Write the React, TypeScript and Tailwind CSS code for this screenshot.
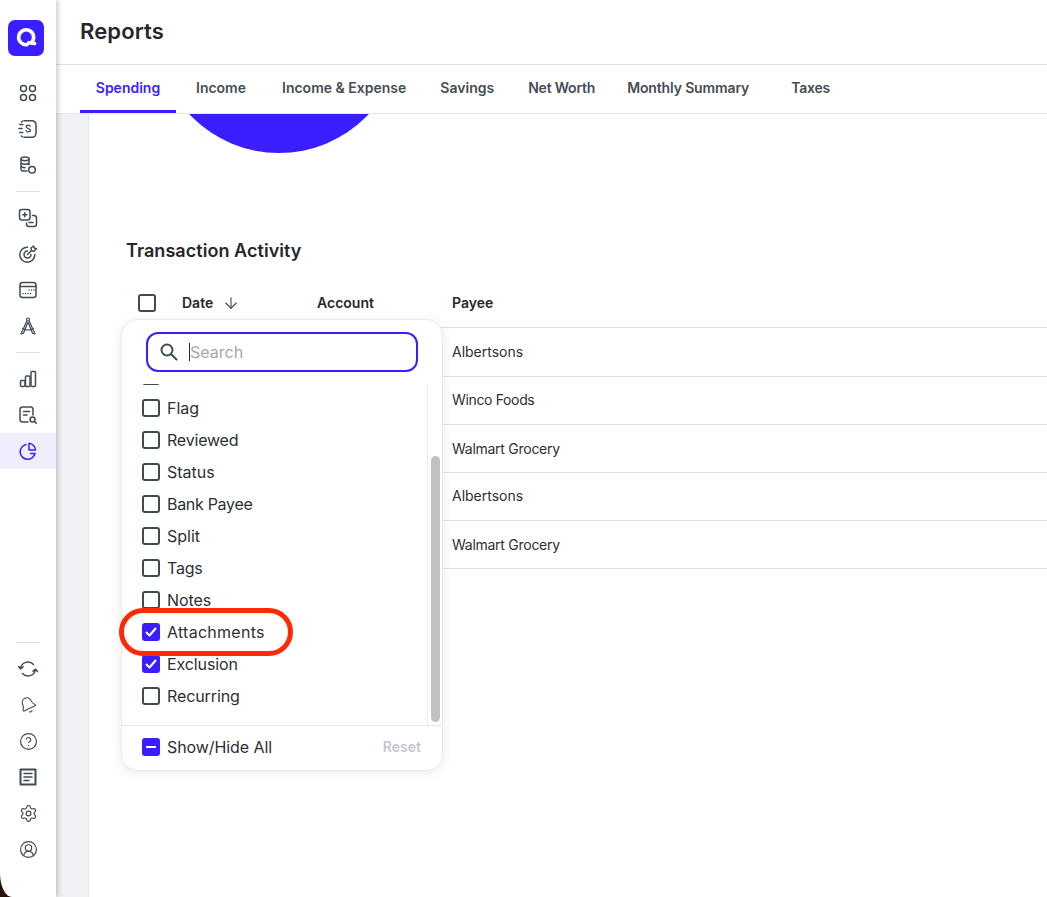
import React from "react";
import { Bell, CircleHelp, Settings, CircleUserRound, ArrowDown } from "lucide-react";

const stroke = { fill: "none", stroke: "currentColor", strokeWidth: 1.5, strokeLinecap: "round" as const, strokeLinejoin: "round" as const };

function Svg({ children }: { children: React.ReactNode }) {
  return <svg width="20" height="20" viewBox="0 0 20 20" {...stroke}>{children}</svg>;
}

const Grid = () => <Svg><circle cx="5.500" cy="5.500" r="3" /><circle cx="14.500" cy="5.500" r="3" /><circle cx="5.500" cy="14.500" r="3" /><circle cx="14.500" cy="14.500" r="3" /></Svg>;
const Receipt = () => <Svg><path d="M6 1.700h8a4 4 0 0 1 4 4v8.600a4 4 0 0 1-4 4H6" /><path d="M4.500 2.200l-1 .8M1.800 5.500h3M1 9.500h3M1.800 13.500h3M3.500 17l1 .8" /><path d="M12.200 7.200c-.4-.7-1.100-1-2-1-1.200 0-2 .6-2 1.600 0 2.200 4.200 1.200 4.200 3.500 0 1-.9 1.600-2.100 1.600-1 0-1.800-.4-2.200-1.200" strokeWidth="1.300" /></Svg>;
const Coins = () => <Svg><ellipse cx="7" cy="3.800" rx="4" ry="1.900" /><path d="M3 3.800v10.400c0 1 1.800 1.900 4 1.900h2M11 3.800v6M3 7.300c0 1 1.800 1.900 4 1.900s4-.9 4-1.900M3 10.800c0 1 1.800 1.900 4 1.900" /><circle cx="14" cy="14.800" r="3.300" /></Svg>;
const PlusMinus = () => <Svg><rect x="1.500" y="1.500" width="10.500" height="10.500" rx="2.500" /><path d="M6.800 4.800v4M4.800 6.800h4" /><path d="M14.500 7.500h1.500a2.500 2.500 0 0 1 2.500 2.500v6a2.500 2.500 0 0 1-2.500 2.500h-5a2.500 2.500 0 0 1-2.500-2.500V15" /><path d="M11 14.500h4" /></Svg>;
const Target = () => <Svg><path d="M9.500 3.200a7.500 7.500 0 1 0 7.300 7.300" /><path d="M9.500 7a3.500 3.500 0 1 0 3.500 3.500" /><path d="M9.500 10.500l4-4M13 4l2.500-2 .8 2 2 .8-2.300 2.400-2.500-.4z" /></Svg>;
const Calendar = () => <Svg><rect x="2" y="2.500" width="16" height="15" rx="2.500" /><path d="M2 6.500h16" /><path d="M11 10h.01M13.500 10h.01M16 10h.01M5 13.500h.01M7.500 13.500h.01M10 13.500h.01M12.500 13.500h.01" /></Svg>;
const Bars = () => <Svg><rect x="2.500" y="11.500" width="4.500" height="6" rx="1" /><rect x="7.500" y="7" width="4.500" height="10.500" rx="1" /><rect x="13" y="2.500" width="4.500" height="15" rx="1" /></Svg>;
const ReportSearch = () => <Svg><path d="M10 17H4.500A2.500 2.500 0 0 1 2 14.500v-10A2.500 2.500 0 0 1 4.500 2h8A2.500 2.500 0 0 1 15 4.500V10" /><path d="M5.500 6.500h6M5.500 10h3.500" /><circle cx="14.500" cy="14.500" r="2.500" /><path d="M16.500 16.500l1.800 1.800" /></Svg>;
const Pie = () => <Svg><path d="M8 3.500a7.500 7.500 0 1 0 9 9h-4.500" /><path d="M11 2.300a7 7 0 0 1 6.500 6.700H11z" /></Svg>;
const Paper = () => <Svg><rect x="2.500" y="2.500" width="15" height="15" strokeWidth="2" /><path d="M6 6.500h8M6 10h8M6 13.500h5" /></Svg>;
const CompassIcon = () => <Svg><circle cx="10" cy="3.500" r="1.500" strokeWidth="1.200" /><path d="M8.800 5L3 18l2.500-.8L9.800 6.500M11.200 5L17 18l-2.500-.8L10.200 6.500" strokeWidth="1.200" /><path d="M4.800 12.500q5.200 3 10.400 0" strokeWidth="1.200" /></Svg>;
const Sync = () => <Svg><path d="M2.500 9.500A7.500 7.500 0 0 1 15.500 5.500" /><path d="M.6 7.500l1.900 2.300 2.500-2" /><path d="M17.500 10.500A7.500 7.500 0 0 1 4.500 14.500" /><path d="M19.400 12.500l-1.900-2.300-2.500 2" /></Svg>;
const MagnifierIcon = () => <svg width="20" height="20" viewBox="0 0 20 20" fill="none" stroke="currentColor" strokeWidth="2" strokeLinecap="round"><circle cx="8" cy="8" r="5.500" /><path d="M12.200 12.200L17.500 17.500" /></svg>;
const TiltBell = () => <Bell size={18} strokeWidth={1.5} className="-rotate-[25deg]" />;

function Nav({ children, active }: { children: React.ReactNode; active?: boolean }) {
  return (
    <div className={active ? "flex h-9 w-full items-center justify-center bg-[#efedfe] text-[#3b1eff]" : "flex h-9 w-full items-center justify-center text-[#414b55]"}>
      {children}
    </div>
  );
}

const Rule = () => <div className="mx-4 h-px w-6 shrink-0 bg-[#dfe3e6]" />;

function Box({ state }: { state?: "on" | "mixed" }) {
  if (state === "on") {
    return (
      <span className="flex h-[18px] w-[18px] shrink-0 items-center justify-center rounded-[3px] bg-[#3b1eff]">
        <svg width="14" height="14" viewBox="0 0 14 14" fill="none" stroke="white" strokeWidth="2" strokeLinecap="round" strokeLinejoin="round"><path d="M2.500 7.500l3 3 6-7" /></svg>
      </span>
    );
  }
  if (state === "mixed") {
    return (
      <span className="flex h-[18px] w-[18px] shrink-0 items-center justify-center rounded-[3px] bg-[#3b1eff]">
        <span className="h-[2px] w-[10px] bg-white" />
      </span>
    );
  }
  return <span className="h-[18px] w-[18px] shrink-0 rounded-[3px] border-2 border-[#3f4a54]" />;
}

const tabs = [
  { t: "Income", c: "ml-5" },
  { t: "Income & Expense", c: "ml-9" },
  { t: "Savings", c: "ml-[34px]" },
  { t: "Net Worth", c: "ml-[34px] tracking-[-0.2px]" },
  { t: "Monthly Summary", c: "ml-8 tracking-[-0.14px]" },
  { t: "Taxes", c: "ml-[42px] tracking-[-0.2px]" },
];

const rows = [
  { p: "Albertsons", c: "h-[49px]" },
  { p: "Winco Foods", c: "h-12 pb-[2px] tracking-[-0.35px]" },
  { p: "Walmart Grocery", c: "h-12 tracking-[-0.27px]" },
  { p: "Albertsons", c: "h-12 pb-[2px]" },
  { p: "Walmart Grocery", c: "h-12 tracking-[-0.27px]" },
];

const options: { n: string; s?: "on"; c?: string }[] = [
  { n: "" },
  { n: "Flag" },
  { n: "Reviewed", c: "tracking-[-0.2px]" },
  { n: "Status" },
  { n: "Bank Payee", c: "tracking-[-0.3px]" },
  { n: "Split" },
  { n: "Tags", c: "tracking-[-0.2px]" },
  { n: "Notes", c: "tracking-[-0.1px]" },
  { n: "Attachments", s: "on", c: "tracking-[0.27px]" },
  { n: "Exclusion", s: "on", c: "tracking-[-0.1px]" },
  { n: "Recurring", c: "tracking-[-0.1px]" },
];

export default function App() {
  return (
    <div className="relative flex h-[897px] w-[1047px] overflow-hidden bg-[#2a1206] font-['Inter',sans-serif] text-[#24282c]">
      <aside className="relative z-20 flex h-full w-14 shrink-0 flex-col rounded-bl-[12px_24px] bg-white pt-5 shadow-[2px_0_5px_rgba(0,0,0,0.2)]">
        <div className="mx-2 flex h-9 w-9 items-center justify-center rounded-[7px] bg-[#3b1eff]">
          <svg width="26" height="26" viewBox="0 0 26 26" fill="none" stroke="white" strokeWidth="3.600" strokeLinecap="round">
            <path d="M18.500 17.500a7.500 7.500 0 1 0-4.500 2.200" />
            <path d="M15.500 17.800l6 .7" />
          </svg>
        </div>
        <div className="mt-[19px] flex flex-col">
          <Nav><Grid /></Nav>
          <Nav><Receipt /></Nav>
          <Nav><Coins /></Nav>
        </div>
        <div className="mt-[8px]"><Rule /></div>
        <div className="mt-2 flex flex-col">
          <Nav><PlusMinus /></Nav>
          <Nav><Target /></Nav>
          <Nav><Calendar /></Nav>
          <Nav><CompassIcon /></Nav>
        </div>
        <div className="mt-[8px]"><Rule /></div>
        <div className="mt-2 flex flex-col">
          <Nav><Bars /></Nav>
          <Nav><ReportSearch /></Nav>
          <Nav active><Pie /></Nav>
        </div>
        <div className="mt-auto"><Rule /></div>
        <div className="mb-[30px] mt-[8px] flex flex-col">
          <Nav><Sync /></Nav>
          <Nav><TiltBell /></Nav>
          <Nav><CircleHelp size={19} strokeWidth={1.5} /></Nav>
          <Nav><Paper /></Nav>
          <Nav><Settings size={19} strokeWidth={1.5} /></Nav>
          <Nav><CircleUserRound size={19} strokeWidth={1.5} /></Nav>
        </div>
      </aside>

      <main className="flex h-full min-w-0 flex-1 flex-col bg-white">
        <header className="flex h-[65px] shrink-0 items-center border-b border-[#e0e3e6] pb-[2px] pl-6">
          <h1 className="text-[22px] leading-none font-semibold tracking-[0.14px] text-[#24282c]">Reports</h1>
        </header>
        <nav className="relative z-10 flex h-[49px] shrink-0 items-stretch border-b border-[#e4e7ea] bg-white pl-6 text-sm font-semibold text-[#464d55]">
          <div className="flex h-[48px] w-24 items-center justify-center border-b-[3px] border-[#3b1eff] text-[#3b1eff]">Spending</div>
          {tabs.map((t) => (
            <div key={t.t} className={`flex h-[48px] items-center pb-[3px] ${t.c}`}>{t.t}</div>
          ))}
        </nav>
        <div className="flex min-h-0 flex-1">
          <div className="w-[33px] shrink-0 border-r border-[#e2e5e9] bg-[#f0f1f6]" />
          <section className="min-w-0 flex-1 bg-white">
            <div className="flex h-[39px] overflow-hidden pl-[67px]">
              <svg width="246" height="39" viewBox="0 0 246 39" className="shrink-0">
                <circle cx="123" cy="-84" r="123" fill="#3b1eff" />
              </svg>
            </div>
            <h2 className="ml-[37px] mt-[87px] text-lg leading-[22px] font-semibold tracking-[0.05px] text-[#24282c]">Transaction Activity</h2>
            <div className="ml-[37px] mt-[12px]">
              <div className="flex h-[54px] items-center border-b border-[#e0e3e6] pt-1 text-sm font-semibold">
                <div className="flex w-[191px] items-center pl-3">
                  <Box />
                  <span className="ml-[26px]">Date</span>
                  <ArrowDown size={18} strokeWidth={1.5} className="ml-[9px] text-[#464d55]" />
                </div>
                <div className="w-[135px]">Account</div>
                <div>Payee</div>
              </div>
              {rows.map((r, i) => (
                <div key={i} className={`flex items-center border-b border-[#e0e3e6] pl-[326px] text-sm text-[#2b3036] ${r.c}`}>
                  {r.p}
                </div>
              ))}
            </div>
          </section>
        </div>
      </main>

      <div className="absolute left-[121px] top-[319px] z-30 flex h-[452px] w-[322px] flex-col rounded-2xl border border-[#e8eaec] bg-white shadow-[0_2px_12px_rgba(0,0,0,0.08)]">
        <div className="h-[64px] shrink-0 pl-6 pt-[12px]">
          <div className="flex h-10 w-[272px] items-center rounded-xl border-2 border-[#3b1eff] pl-[11px]">
            <span className="text-[#414b55]"><MagnifierIcon /></span>
            <span className="ml-[10px] h-[18px] w-px bg-[#24282c]" />
            <span className="text-base text-[#a4a8ac]">Search</span>
          </div>
        </div>
        <div className="flex min-h-0 flex-1">
          <div className="min-w-0 flex-1 overflow-hidden">
            <div className="-mt-6 pl-5">
              {options.map((o, i) => (
                <div key={i} className="flex h-8 items-center gap-[7px] text-base text-[#2b3036]">
                  <Box state={o.s} />
                  {o.n ? <span className={o.c}>{o.n}</span> : null}
                </div>
              ))}
            </div>
          </div>
          <div className="flex w-[15px] shrink-0 flex-col border-l border-[#ececec] bg-white pl-[3px] pr-[2px] pb-[3px] pt-[72px]">
            <div className="flex-1 rounded-full bg-[#c1c1c1]" />
          </div>
        </div>
        <div className="flex h-[45px] shrink-0 items-center justify-between border-t border-[#e4e7ea] pb-[2px] pl-5 pr-[21px]">
          <div className="flex items-center gap-[7px] text-base text-[#2b3036]">
            <Box state="mixed" />
            <span className="tracking-[-0.08px]">Show/Hide All</span>
          </div>
          <span className="text-sm font-semibold text-[#c2c8cd]">Reset</span>
        </div>
      </div>

      <div className="absolute left-[119px] top-[608px] z-40 h-[48px] w-[174px] rounded-full border-[5px] border-[#ff2a05]" />
    </div>
  );
}
